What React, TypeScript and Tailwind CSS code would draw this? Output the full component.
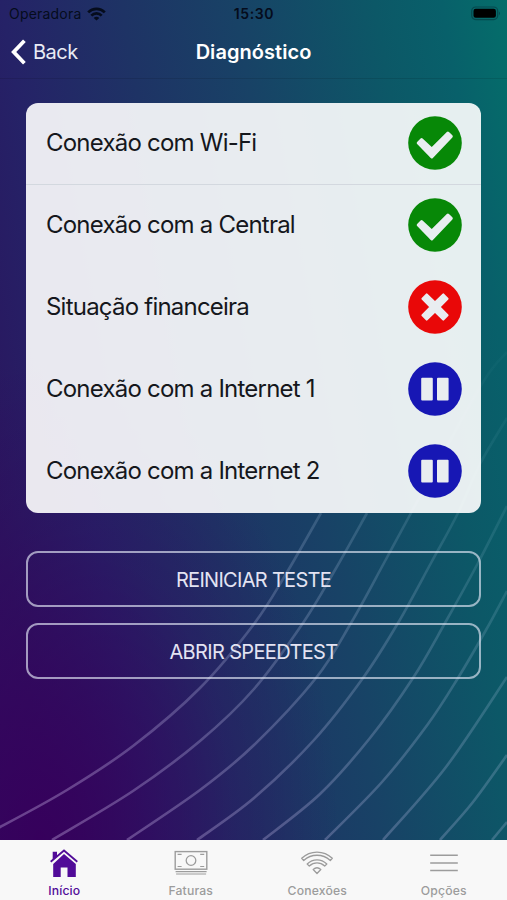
import React from "react";

type Point = [number, number];

const curves: Point[][] = [
  [[-20, 836], [0, 827], [67, 790], [133, 746], [200, 688], [254, 624], [286, 574], [321, 513]],
  [[52, 840], [133, 791], [200, 741], [254, 689], [303, 623], [335, 570], [367, 513]],
  [[127, 840], [200, 790], [254, 745], [316, 678], [351, 623], [384, 563], [411, 513], [480, 387], [507, 352]],
  [[197, 840], [254, 798], [314, 740], [363, 678], [398, 623], [431, 563], [458, 513], [480, 464], [507, 418]],
  [[263, 840], [320, 794], [370, 738], [413, 678], [445, 623], [478, 563], [507, 506]],
  [[325, 840], [382, 782], [428, 724], [458, 678], [486, 630], [507, 591]],
  [[383, 840], [446, 767], [507, 677]],
  [[440, 840], [473, 802], [507, 755]],
  [[492, 840], [507, 822]],
];

// Catmull-Rom spline through the points, expressed as cubic Béziers
function smooth(p: Point[]): string {
  let d = `M${p[0][0]} ${p[0][1]}`;
  for (let i = 0; i < p.length - 1; i++) {
    const a = p[i - 1] ?? p[i];
    const b = p[i];
    const c = p[i + 1];
    const e = p[i + 2] ?? c;
    d += `C${b[0] + (c[0] - a[0]) / 6} ${b[1] + (c[1] - a[1]) / 6} ${c[0] - (e[0] - b[0]) / 6} ${c[1] - (e[1] - b[1]) / 6} ${c[0]} ${c[1]}`;
  }
  return d;
}

function Backdrop() {
  return (
    <svg className="absolute inset-0 -z-10 h-[840px] w-[507px]" viewBox="0 0 507 840" aria-hidden="true">
      <defs>
        <linearGradient id="fade" gradientUnits="userSpaceOnUse" x1="100" y1="840" x2="507" y2="380">
          <stop offset="0" stopColor="#c8b4e6" stopOpacity="0.36" />
          <stop offset="0.6" stopColor="#b4c8e6" stopOpacity="0.21" />
          <stop offset="1" stopColor="#a0dce6" stopOpacity="0.03" />
        </linearGradient>
      </defs>
      {curves.map((c, i) => (
        <path key={i} d={smooth(c)} fill="none" stroke="url(#fade)" strokeWidth="2.6" />
      ))}
    </svg>
  );
}

type Status = "ok" | "fail" | "paused";

function StatusIcon({ status }: { status: Status }) {
  const fill = { ok: "#078807", fail: "#e90808", paused: "#1717b4" }[status];
  return (
    <svg className="h-[54px] w-[54px] shrink-0" viewBox="0 0 54 54">
      <circle cx="27" cy="27" r="26.8" fill={fill} />
      {status === "ok" && (
        <path
          d="M13.6 23.6L23.8 33L39.9 17L43.3 20.4L23.8 40.9L10.2 27Z"
          fill="#e9edf0"
          stroke="#e9edf0"
          strokeWidth="3"
          strokeLinejoin="round"
        />
      )}
      {status === "fail" && (
        <path
          d="M18.7 14.5L27 22.6L35.3 14.5L39.5 18.7L31.4 27L39.5 35.3L35.3 39.5L27 31.4L18.7 39.5L14.5 35.3L22.6 27L14.5 18.7Z"
          fill="#e9edf0"
          stroke="#e9edf0"
          strokeWidth="2.2"
          strokeLinejoin="round"
        />
      )}
      {status === "paused" && (
        <g fill="#e9edf0">
          <rect x="13.2" y="15.8" width="11.6" height="22.8" rx="1" />
          <rect x="29" y="15.8" width="11.6" height="22.8" rx="1" />
        </g>
      )}
    </svg>
  );
}

const rows: { label: string; status: Status }[] = [
  { label: "Conexão com Wi-Fi", status: "ok" },
  { label: "Conexão com a Central", status: "ok" },
  { label: "Situação financeira", status: "fail" },
  { label: "Conexão com a Internet 1", status: "paused" },
  { label: "Conexão com a Internet 2", status: "paused" },
];

function StatusBar() {
  return (
    <div className="relative flex h-[27px] items-center justify-between pl-[9px] pr-[6px] text-[#050c1c]">
      <div className="flex items-center gap-[6px]">
        <span className="text-[14px] leading-none tracking-[0.2px]">Operadora</span>
        <svg className="h-[14px] w-[19px]" viewBox="0 0 19 14" fill="none" stroke="currentColor" strokeWidth="2.7">
          <path d="M1.2 5.4C5.8.7 13.2.7 17.8 5.4M4.3 8.6C7.3 5.7 11.7 5.7 14.7 8.6" />
          <path d="M9.5 13.6L6.7 10.9C8.3 9.4 10.7 9.4 12.3 10.9Z" fill="currentColor" stroke="none" />
        </svg>
      </div>
      <span className="absolute inset-x-0 pl-[1px] text-center text-[14px] font-semibold leading-none tracking-[0.6px]">15:30</span>
      <svg className="h-[15px] w-[30px]" viewBox="0 0 30 15">
        <rect x=".7" y="1" width="26" height="12.6" rx="4" fill="none" stroke="#06494e" strokeWidth="1.2" />
        <rect x="2.5" y="2.8" width="22.4" height="9" rx="2.2" fill="#000" />
        <path d="M28 5.4q2 1.9 0 3.8z" fill="#06494e" />
      </svg>
    </div>
  );
}

function Tab({ label, active, children }: { label: string; active?: boolean; children: React.ReactNode }) {
  return (
    <div className={`flex flex-1 flex-col items-center ${active ? "pl-[1px] text-[#510b98]" : "text-[#9c9c9c]"}`}>
      <svg className="mt-[7px] h-[32px] w-[36px]" viewBox="0 0 36 32" fill="none" stroke="currentColor">
        {children}
      </svg>
      <span className="mt-[4px] text-[12.2px] font-medium leading-[15px] tracking-[0.15px]">{label}</span>
    </div>
  );
}

export default function App() {
  return (
    <div className="relative isolate flex h-[900px] w-[507px] flex-col overflow-hidden bg-[radial-gradient(ellipse_300px_480px_at_40px_840px,#36005cff_0%,#36005caa_30%,#36005c3c_65%,#36005c00_100%),linear-gradient(80deg,#2e105f_0%,#2a165f_10%,#252267_24%,#1e3365_42%,#184266_59%,#0c5867_80%,#08606a_90%,#046e6a_100%)] font-[Inter,'Liberation_Sans',sans-serif]">
      <Backdrop />
      <StatusBar />
      <header className="relative flex h-[52px] items-center border-b border-black/10 pb-[2px] pl-[11px] text-white">
        <svg className="h-[26px] w-[15px]" viewBox="0 0 15 26" fill="none" stroke="#fff" strokeWidth="3.8">
          <path d="M13.4 1.7L2.7 13L13.4 24.3" />
        </svg>
        <span className="ml-[7px] text-[20px] tracking-[-0.5px] text-[#e8ebf5]">Back</span>
        <h1 className="absolute inset-x-0 text-center text-[20px] font-semibold tracking-[0.05px]">Diagnóstico</h1>
      </header>
      <main className="flex flex-1 flex-col px-[26px] pt-[24px]">
        <ul className="h-[410px] w-[455px] overflow-hidden rounded-[12px] bg-white/90">
          {rows.map((r, i) => (
            <li
              key={r.label}
              className={`flex h-[82px] items-center justify-between pl-[20px] pr-[19.5px] ${i === 0 ? "border-b border-[#d3d8df] pb-[1px]" : "pb-[2px]"}`}
            >
              <span className="text-[24px] leading-none tracking-[-0.78px] text-[#15171c]">{r.label}</span>
              <StatusIcon status={r.status} />
            </li>
          ))}
        </ul>
        <button className="mt-[38px] h-[56px] w-[455px] rounded-[12px] border-2 border-[#e4e8f6]/65 pt-[1px] text-[20px] tracking-[-0.7px] text-[#e3e3f2]">
          REINICIAR TESTE
        </button>
        <button className="mt-[16px] h-[56px] w-[455px] rounded-[12px] border-2 border-[#e4e8f6]/65 pt-[1px] text-[20px] tracking-[-0.65px] text-[#e3e3f2]">
          ABRIR SPEEDTEST
        </button>
      </main>
      <nav className="flex h-[60px] shrink-0 bg-[#f8f8f8]">
        <Tab label="Início" active>
          <path d="M7.2 17V30H14.7V20.5H21.5V30H29.8V17L18 6.9Z" fill="currentColor" stroke="none" />
          <path d="M6.7 4.8H11V9L6.7 12.8Z" fill="currentColor" stroke="none" />
          <path d="M4.7 14.8L18 3.5L31.3 14.8" strokeWidth="1.8" />
        </Tab>
        <Tab label="Faturas">
          <rect x="2.2" y="4.6" width="31.6" height="17.6" strokeWidth="1.4" />
          <circle cx="18" cy="13.5" r="4.8" strokeWidth="1.3" />
          <path d="M4.6 7.3H8.6M27.2 7.3H31.2M4.6 19.5H8.6M27.2 19.5H31.2" strokeWidth="1.2" />
          <path d="M2.6 24.7H33.6M3.1 27H33.1" strokeWidth="1.2" />
        </Tab>
        <Tab label="Conexões">
          <g strokeWidth="1.3" strokeLinejoin="round">
            <path d="M2.7 11.3C11.4 3 24.6 3 33.3 11.3L31.3 13.5C23.6 6.5 12.4 6.5 4.7 13.5Z" />
            <path d="M8.2 17C13.8 11.5 22.2 11.5 27.8 17L25.7 19.1C21.1 14.9 14.9 14.9 10.3 19.1Z" />
            <path d="M14.2 22.5Q18 19 21.8 22.5L18 26.5Z" />
          </g>
        </Tab>
        <Tab label="Opções">
          <path d="M4.2 8.3H31.8M4.2 15.9H31.8M4.2 23.5H31.8" strokeWidth="1.5" />
        </Tab>
      </nav>
    </div>
  );
}
